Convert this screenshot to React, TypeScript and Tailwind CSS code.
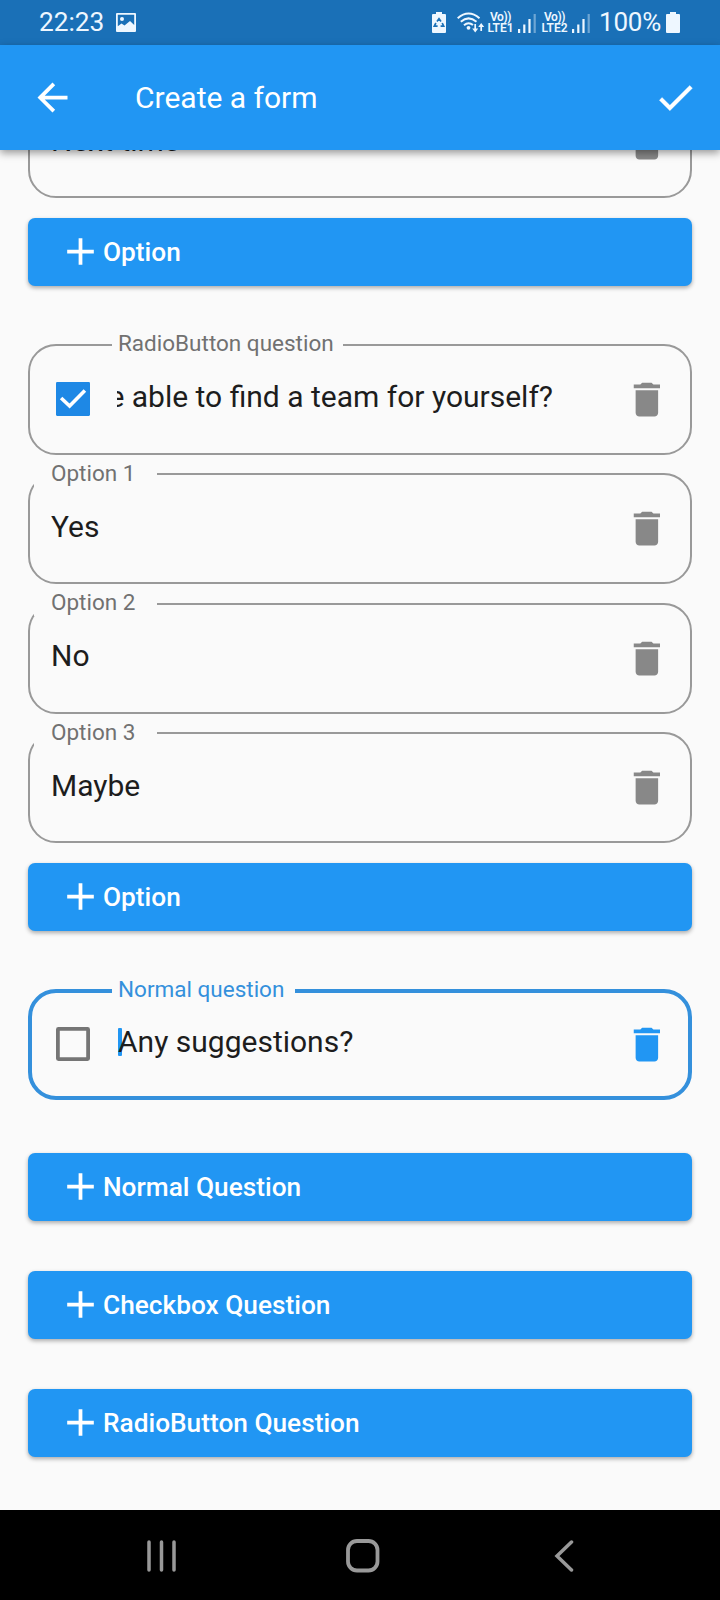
import React from "react";

function DeleteIcon({ className }: { className: string }) {
  return (
    <svg viewBox="0 0 24 24" className={`size-[45px] shrink-0 ${className}`} fill="currentColor">
      <path
        transform="translate(0.2 0)"
        d="M6 19c0 1.100.9 2 2 2h8c1.100 0 2-.9 2-2V7H6v12zM19 4h-3.500l-1-1h-5l-1 1H5v2h14V4z"
      />
    </svg>
  );
}

function Checkbox({ checked }: { checked: boolean }) {
  return (
    <svg viewBox="0 0 18 18" className="-mt-px mr-[27px] size-[34px] shrink-0">
      {checked ? (
        <>
          <rect width="18" height="18" rx="0.6" fill="#1e88e5" />
          <path d="M2.700 8.500 L7.200 12.700 L15.300 4.500" fill="none" stroke="#fff" strokeWidth="1.9" />
        </>
      ) : (
        <rect x="1" y="1" width="16" height="16" rx="0.3" fill="none" stroke="#757575" strokeWidth="2" />
      )}
    </svg>
  );
}

type FieldProps = {
  label?: string;
  value: string;
  kind?: "option" | "question";
  checked?: boolean;
  focused?: boolean;
  scrolled?: boolean;
};

function Field({ label, value, kind = "option", checked = false, focused = false, scrolled = false }: FieldProps) {
  const question = kind === "question";
  return (
    <div
      className={`relative flex h-[111px] shrink-0 items-center rounded-[28px] ${
        focused ? "border-4 border-[#3490dc] pr-[19px] pl-6" : "border-2 border-[#999] pr-[21px]"
      } ${question ? (focused ? "" : "pl-[26px]") : "pl-[21px]"}`}
    >
      {label && (
        <span
          className={`absolute flex h-[26px] items-center bg-[#fafafa] text-[22.5px] whitespace-pre ${
            question
              ? focused
                ? "top-[-16px] left-[80px] w-[183px] pl-[6px] text-[#3490dc]"
                : "top-[-15px] left-[82px] w-[231px] pl-[6px] text-[#717171]"
              : "top-[-14.500px] left-[4px] w-[123px] pl-[17px] text-[#717171]"
          }`}
        >
          {label}
        </span>
      )}
      {question && <Checkbox checked={checked} />}
      <div
        className={`relative flex h-[40px] min-w-0 flex-1 items-center overflow-hidden text-[30px] leading-[40px] whitespace-nowrap text-[#1d1d1d] ${
          question ? "-mt-[5px]" : "-mt-[3.500px]"
        } ${scrolled ? "mr-[71px] justify-end" : ""}`}
      >
        {focused && <i className="absolute top-[6px] left-[1px] h-[28px] w-[4px] rounded-[1px] bg-[#2196f3]" />}
        <span className={`relative shrink-0 ${focused ? "pl-px" : ""}`}>{value}</span>
      </div>
      <DeleteIcon className={focused ? "text-[#2196f3]" : "text-[#888]"} />
    </div>
  );
}

function AddButton({ children }: { children: string }) {
  return (
    <button className="flex h-[68px] w-full shrink-0 items-center rounded-[7px] bg-[#2196f3] pl-[30px] text-[26.25px] font-medium text-white shadow-[0_2px_4px_rgba(0,0,0,0.32)]">
      <svg viewBox="0 0 24 24" className="-mt-px size-[45px] shrink-0" fill="currentColor">
        <path d="M19.1 13h-6.1v6.1h-2V13H4.9v-2H11V4.9h2V11h6.1z" />
      </svg>
      <span className="pt-[2px]">{children}</span>
    </button>
  );
}

function Network({ sim }: { sim: string }) {
  return (
    <>
      <div className="flex w-[27px] flex-col items-center pt-px text-[12px] leading-[11px] font-semibold">
        <span className="whitespace-nowrap tracking-[-0.4px]">Vo))</span>
        <span className="whitespace-nowrap">LTE{sim}</span>
      </div>
      <svg viewBox="0 0 19 20" className="ml-[4px] h-[20px] w-[19px] shrink-0" fill="currentColor">
        <path d="M0 16h2.200v4H0zM5.200 11.500h2.200V20H5.200zM10.400 6h2.200v14h-2.200z" />
        <path d="M15.600 1h2.200v19h-2.200z" opacity="0.4" />
      </svg>
    </>
  );
}

function StatusBar() {
  return (
    <div className="flex h-[45px] shrink-0 items-center bg-[#1a70b7] pl-[39px] text-[#eef7ff]">
      <span className="w-[77px] text-[26.250px]">22:23</span>
      <svg viewBox="0 0 20 19" className="h-[19px] w-[20px]" fill="currentColor">
        <path
          fillRule="evenodd"
          d="M1 0h18q1 0 1 1v17q0 1-1 1H1q-1 0-1-1V1q0-1 1-1zM1.800 1.800v11.500l3.700-2.800 3 2L14 8l4.200 4V1.800zM6 4a2 2 0 110 4 2 2 0 010-4z"
        />
      </svg>
      <svg viewBox="0 0 14 21" className="ml-[296px] h-[21px] w-[14px] shrink-0">
        <path d="M4 0h6v2h3q1 0 1 1v17q0 1-1 1H1q-1 0-1-1V3q0-1 1-1h3z" fill="currentColor" />
        <path
          d="M5 9.400L7 6.600l2 2.800M10.200 11l1.500 3.200H8.600M5.600 14.200H2.300L3.900 11"
          fill="none"
          stroke="#1a70b7"
          strokeWidth="1.700"
        />
      </svg>
      <svg viewBox="0 0 28 21" className="ml-[11px] h-[21px] w-[28px] shrink-0">
        <g fill="none" stroke="currentColor" strokeWidth="2">
          <path d="M0.700 6.200Q11.500 -3.200 22.500 6.200" />
          <path d="M3.800 9.800Q11.500 3 19.500 9.800" />
          <path d="M7 13.200Q11.500 9.300 16 13" />
        </g>
        <circle cx="11.500" cy="15.800" r="1.900" fill="currentColor" />
        <path d="M18.200 12v6M24.200 19v-6" fill="none" stroke="currentColor" strokeWidth="1.700" />
        <path d="M15.200 16.500h6l-3 4zM21.200 15h6l-3-4z" fill="currentColor" />
      </svg>
      <div className="ml-[2px] flex items-center">
        <Network sim="1" />
      </div>
      <div className="ml-[4px] flex items-center">
        <Network sim="2" />
      </div>
      <span className="ml-[8px] w-[67px] text-[26px] tracking-[-0.2px]">100%</span>
      <svg viewBox="0 0 14 21" className="h-[21px] w-[14px] shrink-0" fill="currentColor">
        <path d="M4 0h6v2h3q1 0 1 1v17q0 1-1 1H1q-1 0-1-1V3q0-1 1-1h3z" />
      </svg>
    </div>
  );
}

export default function App() {
  return (
    <div className="flex h-[1600px] w-[720px] flex-col overflow-hidden bg-[#fafafa] font-['Roboto',sans-serif]">
      <StatusBar />
      <header className="relative z-10 flex h-[105px] shrink-0 items-center bg-[#2196f3] pr-[22.500px] pl-[30px] text-white shadow-[0_3px_8px_rgba(0,0,0,0.4)]">
        <svg viewBox="0 0 24 24" className="size-[45px]" fill="currentColor">
          <path d="M20 11H7.830l5.590-5.590L12 4l-8 8 8 8 1.410-1.410L7.830 13H20v-2z" />
        </svg>
        <h1 className="ml-[60px] flex-1 text-[30px]">Create a form</h1>
        <svg viewBox="0 0 24 24" className="size-[45px]" fill="currentColor" stroke="currentColor" strokeWidth="0.2">
          <path d="M9 16.170L4.830 12l-1.420 1.410L9 19 21 7l-1.410-1.410z" />
        </svg>
      </header>
      <main className="flex min-h-0 flex-1 flex-col overflow-hidden px-[28px]">
        <div className="-mt-[63px] flex flex-col">
          <Field value="Next time" />
        </div>
        <div className="mt-[20px] flex flex-col">
          <AddButton>Option</AddButton>
        </div>
        <section className="mt-[58px] flex flex-col">
          <Field label="RadioButton question" value="Were you be able to find a team for yourself?" kind="question" checked scrolled />
          <div className="mt-[18px] flex flex-col gap-[18.500px]">
            <Field label="Option 1" value="Yes" />
            <Field label="Option 2" value="No" />
            <Field label="Option 3" value="Maybe" />
          </div>
          <div className="mt-[20px] flex flex-col">
            <AddButton>Option</AddButton>
          </div>
        </section>
        <section className="mt-[58px] flex flex-col">
          <Field label="Normal question" value="Any suggestions?" kind="question" focused />
        </section>
        <div className="mt-[53px] flex flex-col gap-[50px]">
          <AddButton>Normal Question</AddButton>
          <AddButton>Checkbox Question</AddButton>
          <AddButton>RadioButton Question</AddButton>
        </div>
      </main>
      <nav className="flex h-[90px] shrink-0 items-center bg-black pt-px pl-[146px] text-[#999]">
        <svg viewBox="0 0 31 32" className="h-[32px] w-[31px]" stroke="currentColor" strokeWidth="3.500" strokeLinecap="round">
          <path d="M3 2v28M15.500 2v28M28 2v28" />
        </svg>
        <svg viewBox="0 0 34 34" className="ml-[169px] size-[34px]" fill="none" stroke="currentColor" strokeWidth="3.800">
          <rect x="2" y="2" width="29.500" height="29.500" rx="9" />
        </svg>
        <svg viewBox="0 0 20 32" className="ml-[174px] h-[32px] w-[20px]" fill="none" stroke="currentColor" strokeWidth="3.500" strokeLinecap="round">
          <path d="M17.500 2L3 16l14.500 14" />
        </svg>
      </nav>
    </div>
  );
}
